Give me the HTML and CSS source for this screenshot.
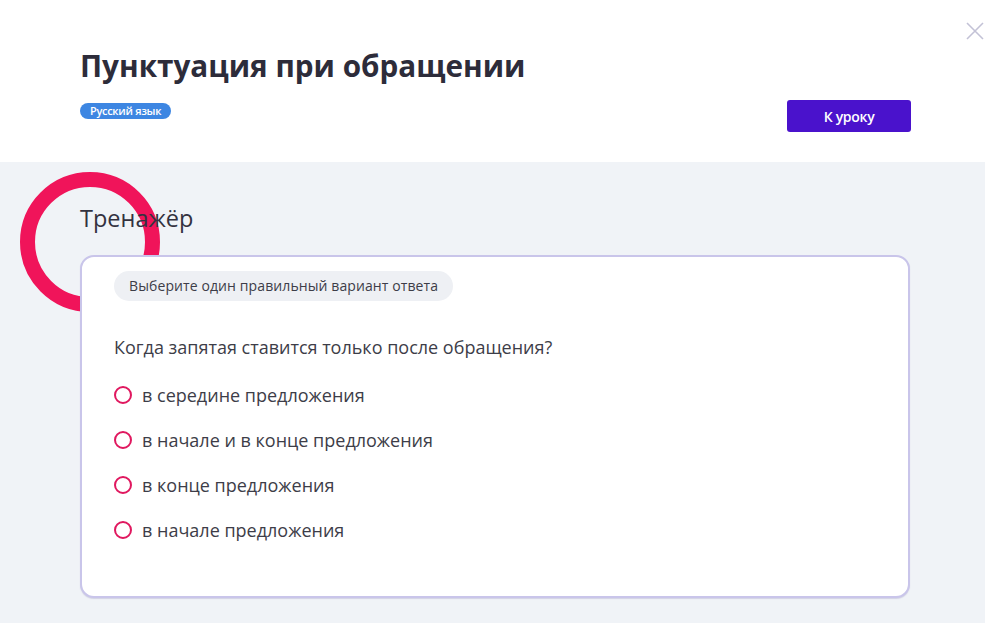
FILE: index.html
```html
<!DOCTYPE html>
<html lang="ru">
<head>
<meta charset="utf-8">
<link rel="stylesheet" href="styles.css">
</head>
<body>
<header class="top">
  <button class="close" aria-label="Закрыть">
    <svg width="20" height="20" viewBox="0 0 20 20"><path d="M2 2L18 18M18 2L2 18" stroke="#c3c2d6" stroke-width="1.6" fill="none"/></svg>
  </button>
  <h1 class="title">Пунктуация при обращении</h1>
  <div class="top-row">
    <span class="badge">Русский язык</span>
    <button class="lesson-btn">К уроку</button>
  </div>
</header>
<main class="trainer">
  <div class="ring"></div>
  <h2 class="trainer-title">Тренажёр</h2>
  <section class="card">
    <div class="chip">Выберите один правильный вариант ответа</div>
    <p class="question">Когда запятая ставится только после обращения?</p>
    <ul class="options">
      <li class="option"><span class="radio"></span>в середине предложения</li>
      <li class="option"><span class="radio"></span>в начале и в конце предложения</li>
      <li class="option"><span class="radio"></span>в конце предложения</li>
      <li class="option"><span class="radio"></span>в начале предложения</li>
    </ul>
  </section>
</main>
</body>
</html>
```
FILE: styles.css
```css
* { box-sizing: border-box; }
html, body { margin: 0; padding: 0; }
body {
  font-family: "Open Sans", "Noto Sans", sans-serif;
  background: #f0f3f7;
  color: #3d3d48;
  width: 985px;
  height: 623px;
  overflow: hidden;
}
.top {
  position: relative;
  background: #fff;
  height: 162px;
  padding: 47px 74px 0 80px;
}
.close {
  position: absolute;
  top: 21px;
  right: 0;
  width: 20px;
  height: 20px;
  padding: 0;
  border: 0;
  background: none;
}
.close svg { display: block; }
.title {
  margin: 0;
  font-size: 29.7px;
  line-height: 37px;
  font-weight: 700;
  color: #2d2c3a;
  letter-spacing: 0;
}
.top-row {
  margin-top: 16px;
  display: flex;
  justify-content: space-between;
  align-items: flex-start;
}
.badge {
  margin-top: 3px;
  background: #3d86e2;
  color: #fff;
  font-size: 11px;
  font-weight: 600;
  line-height: 16px;
  height: 16px;
  padding: 0 10px;
  border-radius: 8px;
  letter-spacing: -0.3px;
}
.lesson-btn {
  width: 124px;
  height: 32px;
  border: 0;
  border-radius: 3px;
  background: #4a12cc;
  color: #fff;
  font-family: "Open Sans", "Noto Sans", sans-serif;
  font-size: 14px;
  font-weight: 600;
  letter-spacing: -0.3px;
  padding: 0;
}
.trainer {
  position: relative;
  padding: 41px 75px 0 80px;
}
.ring {
  position: absolute;
  left: 20px;
  top: 10px;
  width: 140px;
  height: 140px;
  border: 15px solid #f0145a;
  border-radius: 50%;
}
.trainer-title {
  position: relative;
  margin: 0 0 22px;
  font-size: 23.5px;
  line-height: 30px;
  font-weight: 400;
  color: #33323f;
  letter-spacing: 0;
}
.card {
  position: relative;
  height: 343px;
  background: #fff;
  border: 2px solid #c9c5ea;
  border-radius: 14px;
  box-shadow: 0 1px 1px rgba(120, 110, 170, 0.25);
  padding: 14px 32px 0 32px;
}
.chip {
  display: inline-block;
  height: 30px;
  line-height: 30px;
  padding: 0 15px;
  border-radius: 15px;
  background: #eef0f4;
  font-size: 14px;
  font-weight: 500;
  color: #3d3d48;
  letter-spacing: 0.1px;
}
.question {
  margin: 33px 0 22px;
  font-size: 18px;
  line-height: 26px;
  color: #3d3d48;
}
.options {
  list-style: none;
  margin: 0;
  padding: 0;
  display: flex;
  flex-direction: column;
  gap: 19px;
}
.option {
  display: flex;
  align-items: center;
  gap: 10px;
  font-size: 18px;
  line-height: 26px;
  color: #3d3d48;
}
.radio {
  width: 18px;
  height: 18px;
  border: 2px solid #e0185f;
  border-radius: 50%;
  flex: none;
}
```
